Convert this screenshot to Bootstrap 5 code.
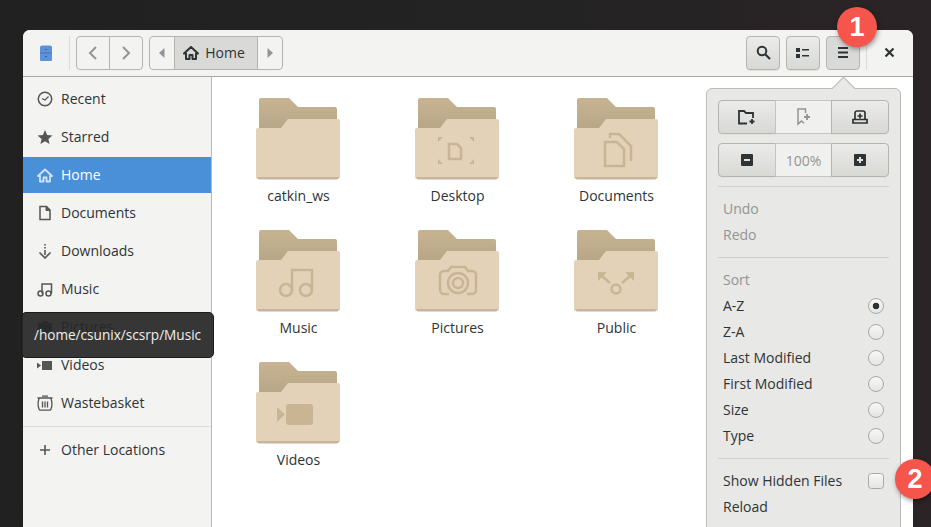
<!DOCTYPE html>
<html lang="en">

<head>
    <meta charset="UTF-8">
    <meta name="viewport" content="width=device-width, initial-scale=1.0">
    <title>Home - Files</title>
    <link href="https://cdn.jsdelivr.net/npm/bootstrap@5.3.0/dist/css/bootstrap.min.css" rel="stylesheet">
    <style>
        html, body { height: 527px; overflow: hidden; }
        body {
            position: relative;
            padding: 30px 0 0 23px;
            background: linear-gradient(90deg, #212122, #242323 60%, #2b2426);
            font-family: "Open Sans", "Noto Sans", sans-serif;
            font-size: 14px;
            color: #2e3436;
        }
        .win { position: relative; width: 890px; height: 497px; background: #fff; border-radius: 7px 7px 0 0; }
        .win-head { height: 47px; padding-bottom: 1px; background: #f3f3f2; border-bottom: 1px solid #a8a8a5; border-radius: 7px 7px 0 0; }
        .app-slot { width: 46px; }
        .head-sep { width: 1px; height: 34px; background: #dcdcda; }
        .head-gap { margin-left: 6px; }
        .hb { height: 34px; padding: 0; display: flex; align-items: center; justify-content: center; border: 1px solid #b4b4b1; border-radius: 4px; color: #2e3436; font-size: 14px; }
        .hb-flat, .hb-flat:hover { background: #f3f3f2; border-color: #b4b4b1; }
        .hb-on, .hb-on:hover { background: #d9d9d7; border-color: #b4b4b1; }
        .hb-raised, .hb-raised:hover { background: linear-gradient(#ebebea, #d8d8d5); border-color: #b4b4b1; box-shadow: 0 1px 0 #e2e2e0; }
        .w-nav { width: 34px; }
        .w-arrow { width: 26px; }
        .w-home { width: 84px; font-weight: 500; gap: 6px; padding-right: 4px; }
        .w-tool { width: 34px; }
        .w-close { width: 44px; margin-left: -6px; border: 0; background: transparent; }
        .head-right { gap: 6px; margin-right: 2px; }
        .side { width: 189px; height: 450px; background: #f3f3f2; border-right: 1px solid #b8b8b5; padding-top: 4px; }
        .side-row { height: 36px; margin-bottom: 2px; padding: 0 0 2px 14px; gap: 8px; color: #2e3436; }
        .side-row svg { flex: none; margin-top: 2px; }
        .side-sel { background: #4a90d9; color: #fff; }
        .side-sep { height: 1px; background: #dcdcda; margin: 5px 0; }
        .files { display: grid; grid-template-columns: repeat(3, 159px); grid-auto-rows: 132px; padding: 20px 0 0 6px; }
        .file-cell { text-align: center; }
        .file-cell svg { display: block; margin: 0 auto; }
        .file-name { margin-top: 3px; padding-left: 2px; line-height: 20px; }
        .pop { position: absolute; left: 683px; top: 58px; width: 195px; height: 460px; padding: 11px; background: #e8e8e6; border: 1px solid #bbbbb8; border-radius: 6px; }
        .pop-tip { position: absolute; left: 128px; top: -9px; width: 17px; height: 17px; background: #e8e8e6; border-left: 1px solid #bbbbb8; border-top: 1px solid #bbbbb8; transform: rotate(45deg); }
        .pop-btns { height: 34px; margin-bottom: 9px; }
        .pop-btns .hb { flex: 1 1 0; height: 34px; }
        .pb-mid, .pb-mid:hover { background: #f0f0ef; border-color: #c4c4c1; color: #929595; }
        .pop-sep { height: 1px; background: #cfcfcc; margin: 9px 0; }
        .pop-row { height: 26px; padding: 0 5px 2px; color: #2e3436; }
        .pop-off { color: #929595; }
        .pop-row .form-check-input { width: 16px; height: 16px; margin: 2px 0 0; flex: none; border: 1px solid #a9a9a6; background: linear-gradient(#f8f8f7, #e4e4e2); box-shadow: none; }
        .pop-row .form-check-input:checked { background: radial-gradient(circle, #2e3436 0 3px, transparent 3.6px), linear-gradient(#f8f8f7, #e4e4e2); border-color: #a9a9a6; }
        .tip-box { position: absolute; left: 21px; top: 312px; width: 193px; height: 46px; background: rgba(38, 38, 38, .92); border: 1px solid #1c1c1c; border-radius: 5px; color: #eeeeec; font-size: 13.6px; }
        .step-mark { position: absolute; width: 40px; height: 40px; background: #f5554a; color: #fff; font-family: "Liberation Sans", sans-serif; font-weight: 700; font-size: 27px; box-shadow: 1px 2px 5px rgba(0, 0, 0, .4); }
        .step-one { left: 837px; top: 7px; }
        .step-two { left: 895px; top: 459px; }
    </style>
    <script defer src="https://cdn.jsdelivr.net/npm/bootstrap@5.3.0/dist/js/bootstrap.bundle.min.js"></script>
</head>

<body>
    <!-- shared folder shape -->
    <svg width="0" height="0" class="position-absolute">
        <defs>
            <linearGradient id="backFill" x1="0" y1="0" x2="0" y2="1">
                <stop offset="0" stop-color="#c6b392" />
                <stop offset="1" stop-color="#b3a383" />
            </linearGradient>
        </defs>
        <symbol id="folder" viewBox="0 0 84 86">
            <path d="M3 3a2 2 0 0 1 2-2h28l9 9h37a2 2 0 0 1 2 2v30H3z" fill="url(#backFill)" />
            <path d="M0 33a2 2 0 0 1 2-2h23l7-9h50a2 2 0 0 1 2 2v56a2 2 0 0 1-2 2H2a2 2 0 0 1-2-2z" fill="#e3d2b8" />
            <path d="M1 80h82l-1 2a2 2 0 0 1-1 .6H3a2 2 0 0 1-1-.6z" fill="#c5b69d" />
        </symbol>
    </svg>

    <div class="win">
        <!-- Header bar -->
        <div class="win-head d-flex align-items-center">
            <div class="app-slot d-flex justify-content-center">
                <svg width="12" height="16" viewBox="0 0 12 16">
                    <path d="M0 1.500 2 .5h8l2 1V15a1 1 0 0 1-1 1H1a1 1 0 0 1-1-1z" fill="#5c93d8" />
                    <path d="M0 8h12" stroke="#3f74b8" />
                    <path d="M5 4.500h2M5 11.500h2" stroke="#2f5f9e" />
                </svg>
            </div>
            <div class="head-sep"></div>
            <div class="btn-group head-gap">
                <button class="btn hb hb-flat w-nav">
                    <svg width="10" height="14" viewBox="0 0 10 14"><path d="M8 1 2 7l6 6" fill="none" stroke="#929595" stroke-width="2" /></svg>
                </button>
                <button class="btn hb hb-flat w-nav">
                    <svg width="10" height="14" viewBox="0 0 10 14"><path d="m2 1 6 6-6 6" fill="none" stroke="#929595" stroke-width="2" /></svg>
                </button>
            </div>
            <div class="btn-group head-gap">
                <button class="btn hb hb-flat w-arrow">
                    <svg width="6" height="10" viewBox="0 0 6 10"><path d="M5.500 0v10L0 5z" fill="#929595" /></svg>
                </button>
                <button class="btn hb hb-on w-home">
                    <svg width="16" height="14" viewBox="0 0 16 14"><path d="M8 1 1 7.500h2V13h3.500V9h3v4H13V7.500h2z" fill="none" stroke="#2e3436" stroke-width="2" stroke-linejoin="round" /></svg>
                    Home
                </button>
                <button class="btn hb hb-flat w-arrow">
                    <svg width="6" height="10" viewBox="0 0 6 10"><path d="M.5 0v10L6 5z" fill="#929595" /></svg>
                </button>
            </div>
            <div class="head-right d-flex align-items-center ms-auto">
                <button class="btn hb hb-raised w-tool">
                    <svg width="15" height="15" viewBox="0 0 15 15"><circle cx="6" cy="6" r="4.300" fill="none" stroke="#2e3436" stroke-width="2" /><path d="m9.500 9.500 4.500 4.500" stroke="#2e3436" stroke-width="2.200" /></svg>
                </button>
                <button class="btn hb hb-raised w-tool">
                    <svg width="14" height="12" viewBox="0 0 14 12"><path d="M0 1h4v4H0zM0 7h4v4H0z" fill="#2e3436" /><path d="M6 2h7v1.500H6zM6 8h7v1.500H6z" fill="#2e3436" /></svg>
                </button>
                <button class="btn hb hb-on w-tool">
                    <svg width="12" height="11" viewBox="0 0 12 11"><path d="M1 0h10v2H1zM1 4.500h10v2H1zM1 9h10v2H1z" fill="#2e3436" /></svg>
                </button>
                <div class="head-sep"></div>
                <button class="btn hb w-close">
                    <svg width="11" height="11" viewBox="0 0 11 11"><path d="m1.500 1.500 8 8m0-8-8 8" stroke="#2e3436" stroke-width="2.200" /></svg>
                </button>
            </div>
        </div>

        <div class="d-flex">
            <!-- Sidebar -->
            <div class="side flex-shrink-0">
                <div class="side-row d-flex align-items-center">
                    <svg width="16" height="16" viewBox="0 0 16 16"><circle cx="8" cy="8" r="6.700" fill="none" stroke="#555753" stroke-width="1.500" /><path d="M5 7.500 8 9l3.500-3.500" fill="none" stroke="#555753" stroke-width="1.200" /></svg>
                    Recent
                </div>
                <div class="side-row d-flex align-items-center">
                    <svg width="16" height="16" viewBox="0 0 16 16"><path d="m8 1 2.100 4.900 5.300.5-4 3.500 1.200 5.200L8 12.300l-4.600 2.800 1.200-5.200-4-3.500 5.300-.5z" fill="#555753" /></svg>
                    Starred
                </div>
                <div class="side-row side-sel d-flex align-items-center">
                    <svg width="16" height="15" viewBox="0 0 16 14"><path d="M8 1 1 7.500h2V13h3.500V9h3v4H13V7.500h2z" fill="none" stroke="#cfe3f8" stroke-width="1.800" stroke-linejoin="round" /></svg>
                    Home
                </div>
                <div class="side-row d-flex align-items-center">
                    <svg width="16" height="16" viewBox="0 0 16 16"><path d="M3 1.500h6.500L13 5v9.500H3z" fill="none" stroke="#555753" stroke-width="1.500" /><path d="M9 1.500V5.500h4" fill="#555753" stroke="#555753" /></svg>
                    Documents
                </div>
                <div class="side-row d-flex align-items-center">
                    <svg width="16" height="16" viewBox="0 0 16 16"><path d="M8 1v1.600M8 4v1.600M8 7v5" stroke="#555753" stroke-width="1.600" /><path d="M2.500 9.500 8 15l5.500-5.500" fill="none" stroke="#555753" stroke-width="1.600" /></svg>
                    Downloads
                </div>
                <div class="side-row d-flex align-items-center">
                    <svg width="16" height="16" viewBox="0 0 16 16"><circle cx="3.500" cy="12.500" r="2.500" fill="none" stroke="#555753" stroke-width="1.500" /><circle cx="11.500" cy="12.500" r="2.500" fill="none" stroke="#555753" stroke-width="1.500" /><path d="M5 12.500V3h9.500v9.500" fill="none" stroke="#555753" stroke-width="1.500" /></svg>
                    Music
                </div>
                <div class="side-row d-flex align-items-center">
                    <svg width="16" height="16" viewBox="0 0 16 16"><path d="M1 4h3l1.500-2h5L12 4h3v10H1z" fill="#555753" /></svg>
                    Pictures
                </div>
                <div class="side-row d-flex align-items-center">
                    <svg width="16" height="16" viewBox="0 0 16 16"><path d="M5 4h10v9H5zM0 5.500 4 8.500 0 11.500z" fill="#555753" /></svg>
                    Videos
                </div>
                <div class="side-row d-flex align-items-center">
                    <svg width="16" height="16" viewBox="0 0 16 16"><path d="M.5 3h15M2 3.500c-1 3-1 8 0 10.500a1.500 1.500 0 0 0 1.500 1.200h9A1.500 1.500 0 0 0 14 14c1-2.500 1-7.500 0-10.500M5 1.200h6M5.500 6.500v6M8 6.500v6M10.500 6.500v6" fill="none" stroke="#555753" stroke-width="1.300" /></svg>
                    Wastebasket
                </div>
                <div class="side-sep"></div>
                <div class="side-row d-flex align-items-center">
                    <svg width="16" height="16" viewBox="0 0 16 16"><path d="M8 3v10M3 8h10" stroke="#555753" stroke-width="1.600" /></svg>
                    Other Locations
                </div>
            </div>

            <!-- Folder grid -->
            <div class="files flex-grow-1">
                <div class="file-cell">
                    <svg width="84" height="86" viewBox="0 0 84 86"><use href="#folder" width="84" height="86" /></svg>
                    <div class="file-name">catkin_ws</div>
                </div>
                <div class="file-cell">
                    <svg width="84" height="86" viewBox="0 0 84 86">
                        <use href="#folder" width="84" height="86" />
                        <path d="M23 45v-5h5M54 40h5v5M59 62v5h-5M28 67h-5v-5" fill="#c9b594" />
                        <path d="M34 47h8l4 4v11H34z" fill="none" stroke="#c9b594" stroke-width="2.500" />
                    </svg>
                    <div class="file-name">Desktop</div>
                </div>
                <div class="file-cell">
                    <svg width="84" height="86" viewBox="0 0 84 86">
                        <use href="#folder" width="84" height="86" />
                        <g fill="none" stroke="#c9b594" stroke-width="2.500">
                            <path d="M31 45h12l7 7v17H31z" />
                            <path d="M36 41V37h9l12 12v15" />
                        </g>
                    </svg>
                    <div class="file-name">Documents</div>
                </div>
                <div class="file-cell">
                    <svg width="84" height="86" viewBox="0 0 84 86">
                        <use href="#folder" width="84" height="86" />
                        <g fill="none" stroke="#c9b594" stroke-width="2.500">
                            <circle cx="30" cy="61" r="6" />
                            <circle cx="50" cy="61" r="6" />
                            <path d="M36 61V41h20v20" />
                        </g>
                    </svg>
                    <div class="file-name">Music</div>
                </div>
                <div class="file-cell">
                    <svg width="84" height="86" viewBox="0 0 84 86">
                        <use href="#folder" width="84" height="86" />
                        <g fill="none" stroke="#c9b594" stroke-width="2.500">
                            <path d="M34 42h-5a4 4 0 0 0-4 4v15a4 4 0 0 0 4 4h5M52 42h5a4 4 0 0 1 4 4v15a4 4 0 0 1-4 4h-5M33 42l3-4h14l3 4" />
                            <circle cx="43" cy="54" r="10" />
                            <circle cx="43" cy="54" r="5" />
                        </g>
                    </svg>
                    <div class="file-name">Pictures</div>
                </div>
                <div class="file-cell">
                    <svg width="84" height="86" viewBox="0 0 84 86">
                        <use href="#folder" width="84" height="86" />
                        <g fill="none" stroke="#c9b594" stroke-width="2.500">
                            <circle cx="42" cy="60" r="4.500" />
                            <path d="m36 54-8-7M48 54l8-7" />
                        </g>
                        <path d="M24 43h9l-9 9zM60 43h-9l9 9z" fill="#c9b594" />
                    </svg>
                    <div class="file-name">Public</div>
                </div>
                <div class="file-cell">
                    <svg width="84" height="86" viewBox="0 0 84 86">
                        <use href="#folder" width="84" height="86" />
                        <rect x="30" y="43" width="27" height="21" rx="3" fill="#c9b594" />
                        <path d="m21 46 8 7.500-8 7.500z" fill="#c9b594" />
                    </svg>
                    <div class="file-name">Videos</div>
                </div>
            </div>
        </div>

        <!-- Menu popover -->
        <div class="pop">
            <div class="pop-tip"></div>
            <div class="btn-group d-flex pop-btns position-relative">
                <button class="btn hb hb-raised">
                    <svg width="18" height="15" viewBox="0 0 18 15"><path d="M9 13.500H1V1h5l2 2h7v5" fill="none" stroke="#2e3436" stroke-width="1.800" /><path d="M14 9v5M11.500 11.500h5" stroke="#2e3436" stroke-width="1.800" /></svg>
                </button>
                <button class="btn hb pb-mid">
                    <svg width="14" height="18" viewBox="0 0 14 18"><path d="M7 1H1v15l3.500-3 2.500 2.200M7 1h1.500v4" fill="none" stroke="#929595" stroke-width="1.500" /><path d="M10 6v6M7 9h6" stroke="#929595" stroke-width="1.800" /></svg>
                </button>
                <button class="btn hb hb-raised">
                    <svg width="16" height="14" viewBox="0 0 16 14"><path d="M3 9V3a2 2 0 0 1 2-2h6a2 2 0 0 1 2 2v6M8 3.500v5M5.500 6h5" fill="none" stroke="#2e3436" stroke-width="1.700" /><path d="M1 9.500h14v3.500H1z" fill="none" stroke="#2e3436" stroke-width="1.700" /></svg>
                </button>
            </div>
            <div class="btn-group d-flex pop-btns position-relative mb-0">
                <button class="btn hb hb-raised">
                    <svg width="12" height="12" viewBox="0 0 12 12"><path d="M1 0h10a1 1 0 0 1 1 1v10a1 1 0 0 1-1 1H1a1 1 0 0 1-1-1V1a1 1 0 0 1 1-1zm2 5v2h6V5z" fill="#2e3436" fill-rule="evenodd" /></svg>
                </button>
                <button class="btn hb pb-mid">100%</button>
                <button class="btn hb hb-raised">
                    <svg width="12" height="12" viewBox="0 0 12 12"><path d="M1 0h10a1 1 0 0 1 1 1v10a1 1 0 0 1-1 1H1a1 1 0 0 1-1-1V1a1 1 0 0 1 1-1zm4 3v2H3v2h2v2h2V7h2V5H7V3z" fill="#2e3436" fill-rule="evenodd" /></svg>
                </button>
            </div>
            <div class="pop-sep"></div>
            <div class="pop-row pop-off d-flex align-items-center">Undo</div>
            <div class="pop-row pop-off d-flex align-items-center">Redo</div>
            <div class="pop-sep"></div>
            <div class="pop-row pop-off d-flex align-items-center">Sort</div>
            <div class="pop-row d-flex align-items-center justify-content-between">A-Z <input class="form-check-input" type="radio" name="sortBy" checked></div>
            <div class="pop-row d-flex align-items-center justify-content-between">Z-A <input class="form-check-input" type="radio" name="sortBy"></div>
            <div class="pop-row d-flex align-items-center justify-content-between">Last Modified <input class="form-check-input" type="radio" name="sortBy"></div>
            <div class="pop-row d-flex align-items-center justify-content-between">First Modified <input class="form-check-input" type="radio" name="sortBy"></div>
            <div class="pop-row d-flex align-items-center justify-content-between">Size <input class="form-check-input" type="radio" name="sortBy"></div>
            <div class="pop-row d-flex align-items-center justify-content-between">Type <input class="form-check-input" type="radio" name="sortBy"></div>
            <div class="pop-sep"></div>
            <div class="pop-row d-flex align-items-center justify-content-between">Show Hidden Files <input class="form-check-input" type="checkbox"></div>
            <div class="pop-row d-flex align-items-center">Reload</div>
        </div>
    </div>

    <!-- Tooltip over the sidebar -->
    <div class="tip-box d-flex align-items-center justify-content-center">/home/csunix/scsrp/Music</div>

    <!-- Step markers -->
    <div class="step-mark step-one rounded-circle d-flex align-items-center justify-content-center">1</div>
    <div class="step-mark step-two rounded-circle d-flex align-items-center justify-content-center">2</div>
</body>

</html>
